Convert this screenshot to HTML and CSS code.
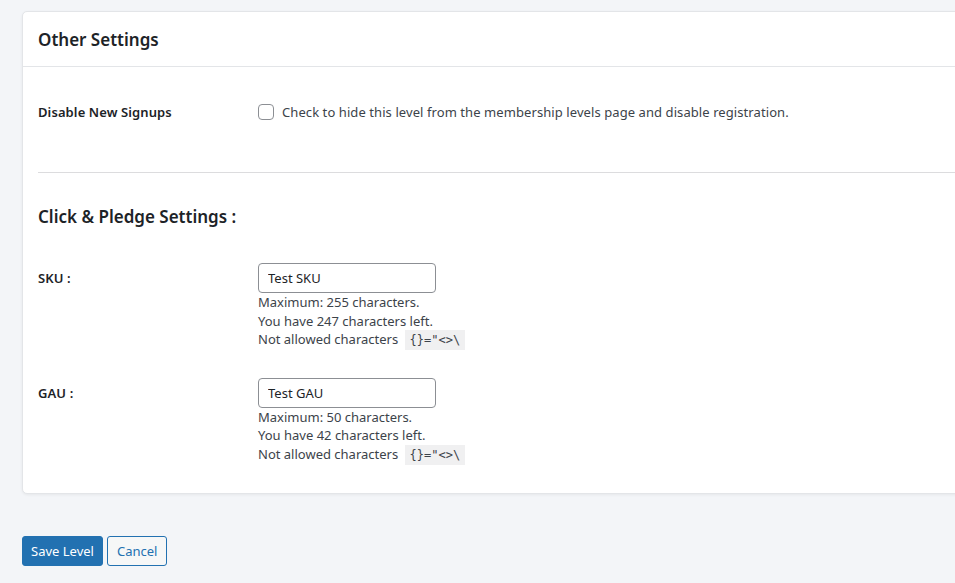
FILE: index.html
```html
<!DOCTYPE html>
<html lang="en">
<head>
    <meta charset="UTF-8">
    <meta name="viewport" content="width=device-width, initial-scale=1.0">
    <title>Edit Membership Level</title>
    <link rel="stylesheet" href="styles.css">
</head>
<body>

    <div class="wrap">
        <div class="section">
            <div class="section-header">
                <h2>Other Settings</h2>
            </div>

            <div class="section-body">
                <div class="form-row signup-row">
                    <div class="form-label">Disable New Signups</div>
                    <div class="form-field">
                        <label class="check-label">
                            <input type="checkbox" class="checkbox">
                            Check to hide this level from the membership levels page and disable registration.
                        </label>
                    </div>
                </div>

                <hr class="divider">

                <h3 class="sub-title">Click &amp; Pledge Settings :</h3>

                <div class="form-row field-row">
                    <div class="form-label">SKU :</div>
                    <div class="form-field">
                        <input type="text" class="text-input" value="Test SKU">
                        <p class="help">Maximum: 255 characters.</p>
                        <p class="help">You have 247 characters left.</p>
                        <p class="help">Not allowed characters <code>{}="&lt;&gt;\</code></p>
                    </div>
                </div>

                <div class="form-row field-row">
                    <div class="form-label">GAU :</div>
                    <div class="form-field">
                        <input type="text" class="text-input" value="Test GAU">
                        <p class="help">Maximum: 50 characters.</p>
                        <p class="help">You have 42 characters left.</p>
                        <p class="help">Not allowed characters <code>{}="&lt;&gt;\</code></p>
                    </div>
                </div>
            </div>
        </div>

        <div class="actions">
            <button class="button button-primary">Save Level</button>
            <button class="button button-secondary">Cancel</button>
        </div>
    </div>

</body>
</html>
```

FILE: styles.css
```css
html, body {
    overflow: hidden;
}

body {
    font-family: 'Noto Sans', 'Open Sans', sans-serif;
    font-size: 13px;
    background-color: #f3f5f8;
    color: #1d2327;
    margin: 0;
    padding: 0;
}

.wrap {
    padding: 11px 0 0 22px;
}

.section {
    background-color: #fff;
    border: 1px solid #e3e5e8;
    border-radius: 5px;
    box-shadow: 0 1px 3px rgba(0, 0, 0, 0.06);
    margin-right: -40px;
}

.section-header {
    border-bottom: 1px solid #e3e5e8;
    height: 54px;
    display: flex;
    align-items: center;
    padding: 0 15px;
}

.section-header h2 {
    margin: 0;
    font-size: 17px;
    font-weight: 600;
    color: #1d2327;
}

.section-body {
    padding: 0 0 29px 15px;
}

.form-row {
    display: flex;
}

.form-label {
    width: 220px;
    flex-shrink: 0;
    font-weight: 600;
    color: #1d2327;
    letter-spacing: 0.1px;
}

.signup-row {
    padding-top: 36px;
    padding-bottom: 51px;
    align-items: center;
}

.check-label {
    display: flex;
    align-items: center;
    gap: 8px;
    color: #3c434a;
    letter-spacing: 0.08px;
}

.checkbox {
    appearance: none;
    width: 16px;
    height: 16px;
    margin: 0;
    border: 1px solid #8c8f94;
    border-radius: 4px;
    background: #fff;
}

.divider {
    border: none;
    border-top: 1px solid #dcdcde;
    margin: 0;
}

.sub-title {
    font-size: 17px;
    font-weight: 600;
    margin: 32px 0 35px;
    color: #1d2327;
}

.field-row .form-label {
    padding-top: 6px;
}

.field-row + .field-row {
    margin-top: 28px;
}

.text-input {
    box-sizing: border-box;
    width: 178px;
    height: 30px;
    border: 1px solid #8c8f94;
    border-radius: 4px;
    padding: 0 9px;
    font-family: inherit;
    font-size: 13px;
    color: #1d2327;
    margin: 0;
    display: block;
}

.help {
    margin: 0;
    line-height: 18.5px;
    color: #3c434a;
}

.help code {
    font-family: 'DejaVu Sans Mono', monospace;
    font-size: 12px;
    background-color: #f0f0f1;
    padding: 3px 5px;
    margin-left: 3px;
}

.actions {
    display: flex;
    gap: 4px;
    margin-top: 42px;
}

.button {
    font-family: inherit;
    font-size: 13px;
    height: 30px;
    padding: 0 8px;
    border-radius: 3px;
    cursor: pointer;
}

.button-primary {
    background-color: #2271b1;
    border: 1px solid #2271b1;
    color: #fff;
}

.button-secondary {
    background-color: #f6f7f7;
    border: 1px solid #2271b1;
    color: #2271b1;
    padding: 0 9px;
}
```
